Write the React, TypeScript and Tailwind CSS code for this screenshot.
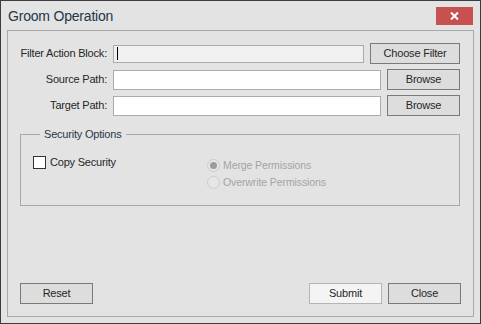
import React from "react";

const btn =
  "h-[21px] border border-[#7a7a7a] bg-[#dddddd] text-[#262626] flex items-center justify-center leading-none";

export default function App() {
  return (
    <div className="w-[481px] h-[324px] bg-[#e3e3e3] border border-[#3c3c3c] flex flex-col font-['Liberation_Sans',sans-serif] text-[11px] tracking-[-0.2px] text-[#262626] select-none">
      <div className="h-[29px] flex items-start justify-between pl-[7px] pr-[7px] shrink-0">
        <span className="mt-[7px] text-[14px] leading-[16px] tracking-[-0.2px] text-[#24364a]">Groom Operation</span>
        <div className="mt-[6px] w-[37px] h-[18px] bg-[#c75050] flex items-center justify-center">
          <svg width="9" height="8" viewBox="0 0 9 8">
            <path d="M1 0.5 L8 7.5 M8 0.5 L1 7.5" stroke="#ffffff" strokeWidth="2" />
          </svg>
        </div>
      </div>
      <div className="mx-[6px] mb-[6px] flex-1 border border-[#a9a9a9] flex flex-col pl-[12px] pr-[12px] pt-[12px] pb-[12px]">
        <div className="flex flex-col gap-[5px] mr-[1px]">
          <div className="flex items-center h-[21px] gap-[6px]">
            <div className="w-[87px] flex justify-end whitespace-nowrap shrink-0">Filter Action Block:</div>
            <div className="flex-1 h-[18px] border border-[#acacac] bg-[#f0f0f0] flex items-center pl-[3px]">
              <span className="w-[1px] h-[13px] bg-[#000000]" />
            </div>
            <div className={btn + " w-[90px]"}>Choose Filter</div>
          </div>
          <div className="flex items-center h-[21px] gap-[6px]">
            <div className="w-[87px] flex justify-end whitespace-nowrap shrink-0">Source Path:</div>
            <div className="flex-1 h-[20px] border border-[#acacac] bg-[#ffffff]" />
            <div className={btn + " w-[73px]"}>Browse</div>
          </div>
          <div className="flex items-center h-[21px] gap-[6px]">
            <div className="w-[87px] flex justify-end whitespace-nowrap shrink-0">Target Path:</div>
            <div className="flex-1 h-[20px] border border-[#acacac] bg-[#ffffff]" />
            <div className={btn + " w-[73px]"}>Browse</div>
          </div>
        </div>
        <fieldset className="mt-[11px] mr-[1px] border border-[#a9a9a9] pl-[12px] pt-[14px] pb-[16px]">
          <legend className="ml-[7px] px-[4px] leading-[15px] text-[#2a3848]">Security Options</legend>
          <div className="flex items-start">
            <div className="w-[174px] flex items-center gap-[4px] h-[13px]">
              <span className="w-[13px] h-[13px] border border-[#333333] bg-[#ffffff] shrink-0" />
              <span className="leading-none">Copy Security</span>
            </div>
            <div className="flex flex-col gap-[4px] mt-[3px] text-[10.5px] tracking-[-0.1px] text-[#a3a3a3]">
              <div className="flex items-center gap-[3px] h-[13px]">
                <span className="w-[13px] h-[13px] rounded-full border border-[#cccccc] bg-[#e6e6e6] flex items-center justify-center shrink-0">
                  <span className="w-[7px] h-[7px] rounded-full bg-[#9c9c9c]" />
                </span>
                <span className="leading-none">Merge Permissions</span>
              </div>
              <div className="flex items-center gap-[3px] h-[13px]">
                <span className="w-[13px] h-[13px] rounded-full border border-[#cccccc] bg-[#e6e6e6] shrink-0" />
                <span className="leading-none">Overwrite Permissions</span>
              </div>
            </div>
          </div>
        </fieldset>
        <div className="mt-auto flex items-center">
          <div className={btn + " w-[73px]"}>Reset</div>
          <div className="ml-auto flex gap-[6px]">
            <div className="h-[21px] w-[73px] border border-[#b4b4b4] bg-[#f4f4f4] flex items-center justify-center leading-none">Submit</div>
            <div className={btn + " w-[73px]"}>Close</div>
          </div>
        </div>
      </div>
    </div>
  );
}
